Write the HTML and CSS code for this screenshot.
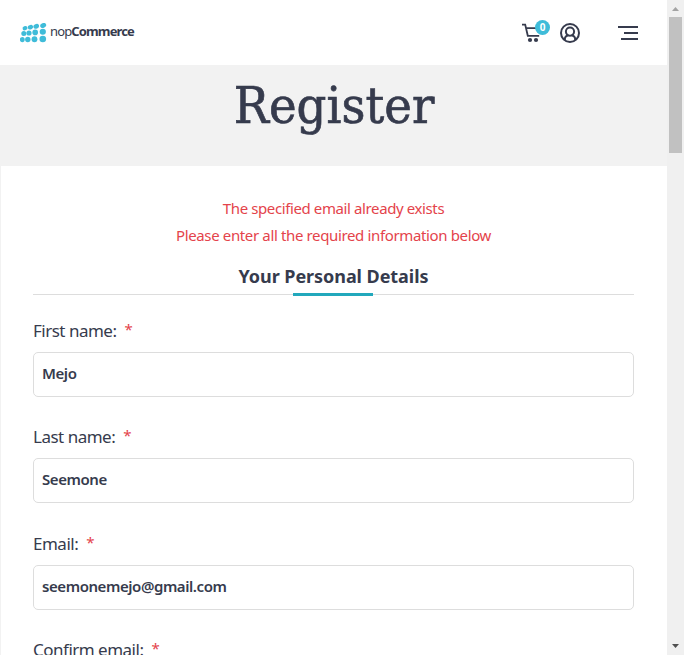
FILE: index.html
```html
<!DOCTYPE html>
<html lang="en">
<head>
<meta charset="utf-8">
<title>Register</title>
<link rel="stylesheet" href="styles.css">
</head>
<body>
<div class="page">
  <header class="header">
    <a class="logo">
      <svg width="27" height="20" viewBox="0 0 27 20" fill="#3fbcd9">
        <ellipse cx="5" cy="5.2" rx="2.5" ry="2.1" transform="rotate(-25 5 5.2)"/><ellipse cx="10.4" cy="4.2" rx="2.7" ry="2.2" transform="rotate(-25 10.4 4.2)"/><ellipse cx="16.2" cy="3.3" rx="2.9" ry="2.3" transform="rotate(-25 16.2 3.3)"/><ellipse cx="23.2" cy="2.5" rx="3.1" ry="2.4" transform="rotate(-20 23.2 2.5)"/>
        <ellipse cx="3.8" cy="10.5" rx="2.5" ry="2.5"/><ellipse cx="9" cy="10" rx="2.6" ry="2.6"/><ellipse cx="15.2" cy="9.4" rx="2.8" ry="2.8"/><ellipse cx="22.8" cy="8.8" rx="3.1" ry="3"/>
        <ellipse cx="2.3" cy="16.6" rx="2.4" ry="2.7"/><ellipse cx="7.8" cy="16.5" rx="2.7" ry="2.8"/><ellipse cx="14.5" cy="16.3" rx="2.9" ry="3"/><ellipse cx="22.8" cy="16" rx="3.3" ry="3.3"/>
      </svg>
      <span class="brand">nop<b>Commerce</b></span>
    </a>
    <nav class="tools">
      <span class="cart">
        <svg width="20" height="20" viewBox="0 0 20 20" fill="none" stroke="#363b4d" stroke-width="1.8"><path d="M0 1.6H3.2L5.8 12.8H17.2M4.2 5.1H14"/><g fill="#363b4d" stroke="none"><circle cx="8" cy="17" r="2.1"/><circle cx="14" cy="17" r="2.1"/></g></svg>
        <span class="badge">0</span>
      </span>
      <svg class="user" width="20" height="20" viewBox="0 0 20 20" fill="none" stroke="#363b4d" stroke-width="2"><circle cx="10" cy="10" r="9"/><circle cx="10" cy="8.6" r="4.1"/><path d="M4.8 17.2V16.5C4.8 14 6.6 12.5 8.5 12.2M15.2 17.2V16.5C15.2 14 13.4 12.5 11.5 12.2"/></svg>
      <svg class="menu" width="20" height="14" viewBox="0 0 20 14" fill="none" stroke="#363b4d" stroke-width="2"><path d="M0 1H20M6 7H20M3 13H20"/></svg>
    </nav>
  </header>
  <main>
    <div class="title"><h1>Register</h1></div>
    <form class="form">
      <ul class="errors">
        <li class="first">The specified email already exists</li>
        <li>Please enter all the required information below</li>
      </ul>
      <h2>Your Personal Details</h2>
      <div class="field"><label>First name:<i>*</i></label><input value="Mejo"></div>
      <div class="field"><label>Last name:<i>*</i></label><input value="Seemone"></div>
      <div class="field"><label>Email:<i>*</i></label><input value="seemonemejo@gmail.com"></div>
      <div class="field"><label>Confirm email:<i>*</i></label><input></div>
    </form>
  </main>
</div>
<aside class="scrollbar">
  <svg width="17" height="17" fill="#a3a3a3"><path d="M5 11L8.5 7L12 11Z"/></svg>
  <div class="thumb"></div>
  <svg class="down" width="17" height="17" fill="#505050"><path d="M5 6L8.5 10L12 6Z"/></svg>
</aside>
</body>
</html>
```

FILE: styles.css
```css
* { box-sizing: border-box; margin: 0; padding: 0; }
body { display: flex; height: 655px; overflow: hidden; background: #fff; color: #363b4d; font-family: "Noto Sans", sans-serif; }
.page { width: 667px; height: 655px; overflow: hidden; }
.header { display: flex; justify-content: space-between; height: 65px; padding: 0 29px 0 20px; }
.logo { display: flex; gap: 3px; padding-top: 23px; }
.brand { font: 13px/16px "Noto Sans", sans-serif; letter-spacing: -0.87px; }
.tools { display: flex; align-items: flex-start; }
.cart { position: relative; height: 20px; margin: 23px 18px 0 0; }
.cart svg, .tools svg { display: block; }
.badge { position: absolute; left: 13px; top: -3px; width: 15px; height: 15px; border-radius: 50%; background: #3fbcd9; color: #fff; font: bold 10px/15px "Noto Sans", sans-serif; text-align: center; }
.user { margin: 23px 38px 0 0; }
.menu { margin-top: 26px; }
main { border-left: 1px solid #f2f2f2; }
.title { height: 101px; background: #f2f2f2; text-align: center; }
h1 { padding-top: 1px; font: 50px/80px "DejaVu Serif", serif; transform: scaleX(.935); -webkit-text-stroke: .7px #363b4d; }
.form { padding: 29px 33px 0 32px; }
.errors { list-style: none; color: #e4434b; font-size: 15px; line-height: 27px; text-align: center; }
.errors li { letter-spacing: -.36px; }
.errors .first { letter-spacing: -.39px; }
h2 { position: relative; height: 46px; margin-bottom: 22px; border-bottom: 1px solid #ddd; font-size: 18px; line-height: 54px; text-align: center; letter-spacing: -.06px; }
h2::after { content: ""; position: absolute; left: 260px; bottom: -2px; width: 80px; height: 3px; background: #22a8bc; }
.field { height: 106.4px; }
label { display: block; height: 35px; font-size: 17px; line-height: 27px; letter-spacing: -.5px; }
label i { position: relative; top: -2px; margin-left: 8px; color: #e4434b; font-style: normal; font-size: 15px; line-height: 1; }
input { display: block; width: 601px; height: 45px; padding: 0 8px 3px; border: 1px solid #ddd; border-radius: 5px; color: #363b4d; font: 600 15px "Noto Sans", sans-serif; letter-spacing: -.43px; }
.scrollbar { display: flex; flex-direction: column; align-items: center; width: 17px; height: 655px; background: #f0f0f0; }
.thumb { width: 13px; height: 136px; background: #c1c1c1; }
.down { margin-top: auto; }
```
